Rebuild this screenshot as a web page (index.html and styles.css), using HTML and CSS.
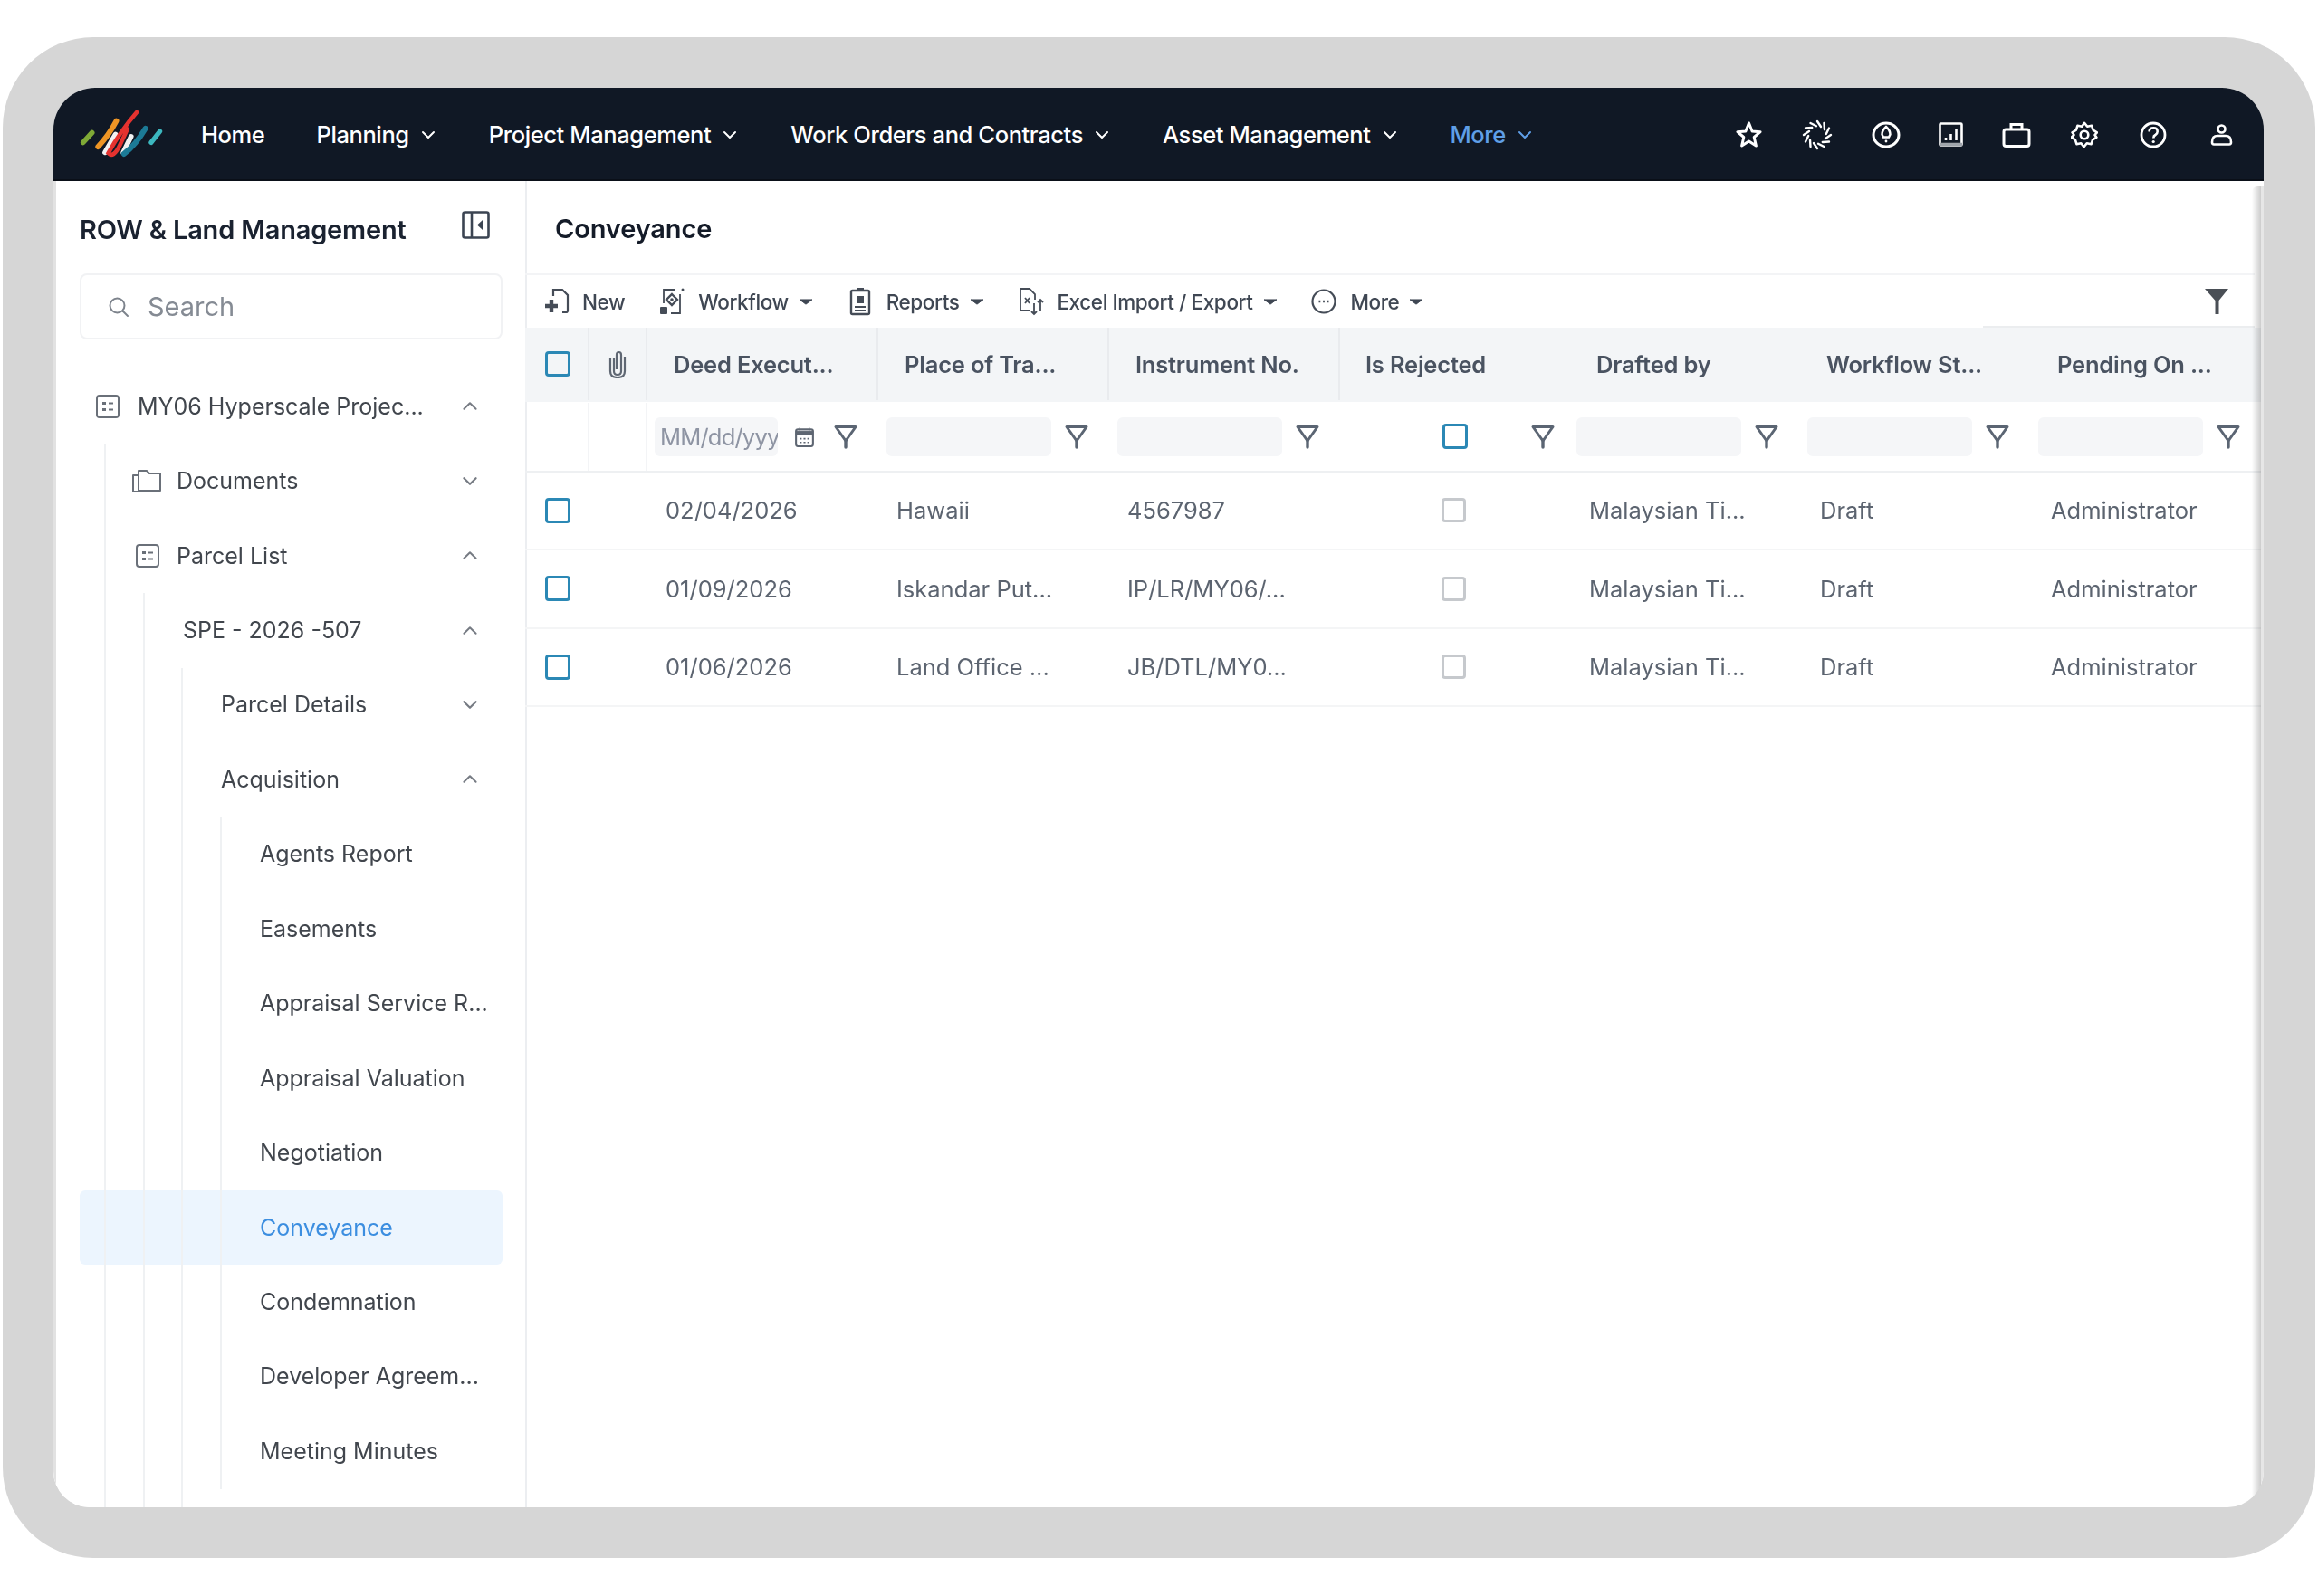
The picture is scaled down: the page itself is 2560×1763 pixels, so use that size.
FILE: index.html
```html
<!DOCTYPE html>
<html lang="en">
<head>
<meta charset="utf-8">
<title>Conveyance</title>
<link rel="stylesheet" href="styles.css">
</head>
<body>
<svg class="defs" aria-hidden="true">
  <symbol id="chev" viewBox="0 0 16 10"><path d="M2 2l6 6 6-6" fill="none" stroke="currentColor" stroke-width="2" stroke-linecap="round" stroke-linejoin="round"/></symbol>
  <symbol id="chev-up" viewBox="0 0 16 10"><path d="M2 8l6-6 6 6" fill="none" stroke="currentColor" stroke-width="1.800" stroke-linecap="round" stroke-linejoin="round"/></symbol>
  <symbol id="caret" viewBox="0 0 18 8"><path d="M1 1h16L9 7z" fill="currentColor" stroke="currentColor" stroke-linejoin="round"/></symbol>
  <symbol id="funnel" viewBox="0 0 28 28"><path d="M3 3.500h22L14 19z" fill="none" stroke="currentColor" stroke-width="3" stroke-linejoin="round"/><path d="M14 18v8" stroke="currentColor" stroke-width="3.400" stroke-linecap="round"/></symbol>
  <symbol id="grid-doc" viewBox="0 0 28 28"><rect x="2" y="2" width="24" height="24" rx="3" fill="none" stroke="currentColor" stroke-width="2"/><rect x="8" y="9" width="4" height="3" fill="currentColor"/><rect x="15" y="9.500" width="5" height="2" fill="currentColor"/><rect x="8" y="16" width="4" height="3" fill="currentColor"/><rect x="15" y="16.500" width="5" height="2" fill="currentColor"/></symbol>
</svg>

<div class="frame">
  <div class="app">
    <header class="nav">
      <svg class="logo" viewBox="50 95 280 160" aria-label="Logo">
        <g fill="none" stroke-linecap="round">
          <path d="M64 205L94 172" stroke="#7fa936" stroke-width="17"/>
          <path d="M114 219Q150 180 175 133" stroke="#ee9525" stroke-width="18"/>
          <path d="M137 238L172 178M198 238L224 185" stroke="#f2f2f2" stroke-width="17"/>
          <path d="M243 104Q190 165 148 240Q165 258 186 215L212 160" stroke="#e5322f" stroke-width="14"/>
          <path d="M200 243Q238 215 272 158" stroke="#1c7a96" stroke-width="18"/>
          <path d="M291 205L320 168" stroke="#3cb7bf" stroke-width="16"/>
        </g>
      </svg>
      <nav class="nav-menu">
        <a class="nav-link nav-home">Home</a>
        <a class="nav-link">Planning<svg class="nav-chev"><use href="#chev"/></svg></a>
        <a class="nav-link">Project Management<svg class="nav-chev"><use href="#chev"/></svg></a>
        <a class="nav-link">Work Orders and Contracts<svg class="nav-chev"><use href="#chev"/></svg></a>
        <a class="nav-link">Asset Management<svg class="nav-chev"><use href="#chev"/></svg></a>
        <a class="nav-link is-more">More<svg class="nav-chev"><use href="#chev"/></svg></a>
      </nav>
      <div class="nav-icons">
        <span class="slot"><svg class="ic-star" viewBox="0 0 31 32"><path d="M15.500 3l3.600 9 9 .7-6.900 5.800 2.200 9.500-7.900-5.100L7.600 28l2.200-9.500L2.900 12.700l9-.7z" fill="none" stroke="currentColor" stroke-width="3" stroke-linejoin="round"/></svg></span>
        <span class="slot"><svg class="ic-spin" viewBox="0 0 34 34"><g fill="none" stroke="currentColor" stroke-width="2.400" stroke-linecap="round"><path d="M17 2l4 6"/><path d="M17 2l4 6" transform="rotate(30 17 17)"/><path d="M17 2l4 6" transform="rotate(60 17 17)"/><path d="M17 2l4 6" transform="rotate(90 17 17)"/><path d="M17 2l4 6" transform="rotate(120 17 17)"/><path d="M17 2l4 6" transform="rotate(150 17 17)"/><path d="M17 2l4 6" transform="rotate(180 17 17)"/><path d="M17 2l4 6" transform="rotate(210 17 17)"/><path d="M17 2l4 6" transform="rotate(240 17 17)"/><path d="M17 2l4 6" transform="rotate(270 17 17)"/><path d="M17 2l4 6" transform="rotate(300 17 17)"/><path d="M17 2l4 6" transform="rotate(330 17 17)"/></g></svg></span>
        <span class="slot"><svg class="ic-rocket" viewBox="0 0 32 30"><ellipse cx="16" cy="15" rx="14" ry="13" fill="none" stroke="currentColor" stroke-width="3"/><path d="M16 6q4.500 4 4.500 8.500l-1.500 3h-6l-1.500-3Q11.500 10 16 6z" fill="none" stroke="currentColor" stroke-width="2.400"/><circle cx="16" cy="22" r="1.400" fill="currentColor"/></svg></span>
        <span class="slot slot-tight"><svg class="ic-chart" viewBox="0 0 27 27"><rect x="1.500" y="1.500" width="24" height="24" rx="1" fill="none" stroke="currentColor" stroke-width="2.600"/><path d="M1 24.500h25" stroke="#a0a5ac" stroke-width="3.500"/><path d="M8 20v-3M13.500 20v-7M19.500 20V8" stroke="currentColor" stroke-width="2.600"/></svg></span>
        <span class="slot"><svg class="ic-bag" viewBox="0 0 32 28"><rect x="2" y="8" width="28" height="18.500" rx="2.500" fill="none" stroke="currentColor" stroke-width="3"/><path d="M10 8V2.500h12V8" fill="none" stroke="currentColor" stroke-width="3"/></svg></span>
        <span class="slot"><svg class="ic-gear" viewBox="0 0 30 30"><path d="M15 1.800l3.200 4 4.900-1 1.500 4.900 4.300 2.600L26.500 15l1.900 2.700-4.300 2.600-1.500 4.900-4.900-1-3.200 4-3.200-4-4.900 1-1.500-4.900-4.300-2.600L3.500 15l-1.900-2.700 4.300-2.600 1.500-4.900 4.900 1z" fill="none" stroke="currentColor" stroke-width="2.600" stroke-linejoin="round"/><circle cx="15" cy="15" r="4.300" fill="none" stroke="currentColor" stroke-width="2.600"/></svg></span>
        <span class="slot"><svg class="ic-help" viewBox="0 0 30 30"><circle cx="15" cy="15" r="13" fill="none" stroke="currentColor" stroke-width="2.800"/><path d="M10.500 11.500q.5-4.200 4.700-4.200 4.500 0 4.500 4 0 2.400-2.300 3.700-2.100 1.100-2.100 3.400" fill="none" stroke="currentColor" stroke-width="2.600"/><circle cx="15.200" cy="22.500" r="1.600" fill="currentColor"/></svg></span>
        <span class="slot"><svg class="ic-user" viewBox="0 0 25 24"><circle cx="12.500" cy="5.500" r="4" fill="none" stroke="currentColor" stroke-width="2.600"/><path d="M2 20q0-7 6-7h9q6 0 6 7 0 2.500-2 2.500H4q-2 0-2-2.500z" fill="none" stroke="currentColor" stroke-width="2.600"/></svg></span>
      </div>
    </header>

    <div class="workspace">
      <aside class="sidebar">
        <div class="side-head">
          <h2 class="side-title">ROW &amp; Land Management</h2>
          <svg class="collapse" viewBox="0 0 31 31"><rect x="1.500" y="1.500" width="28" height="28" rx="2" fill="none" stroke="currentColor" stroke-width="2.600"/><path d="M11 2v27" stroke="currentColor" stroke-width="2.600"/><path d="M23 10v11l-6-5.500z" fill="currentColor"/></svg>
        </div>
        <div class="search">
          <svg class="search-icon" viewBox="0 0 24 24"><circle cx="10.500" cy="10.500" r="8" fill="none" stroke="currentColor" stroke-width="2"/><path d="M16.500 16.500L22 22" stroke="currentColor" stroke-width="2" stroke-linecap="round"/></svg>
          <span>Search</span>
        </div>
        <ul class="tree">
          <li>
            <div class="row row-root">
              <svg class="row-icon icon-root"><use href="#grid-doc"/></svg>
              <span class="label">MY06 Hyperscale Projec...</span>
              <svg class="tree-chev"><use href="#chev-up"/></svg>
            </div>
            <ul class="level level-2">
              <li>
                <div class="row row-icon-row">
                  <svg class="row-icon" viewBox="0 0 34 28"><path d="M8 5V3h9l3 3h12v19H8zM8 8H2v18h26" fill="none" stroke="currentColor" stroke-width="2" stroke-linejoin="round"/></svg>
                  <span class="label">Documents</span>
                  <svg class="tree-chev"><use href="#chev"/></svg>
                </div>
              </li>
              <li>
                <div class="row row-icon-row">
                  <svg class="row-icon icon-parcel"><use href="#grid-doc"/></svg>
                  <span class="label">Parcel List</span>
                  <svg class="tree-chev"><use href="#chev-up"/></svg>
                </div>
                <ul class="level level-3">
                  <li>
                    <div class="row row-text"><span class="label">SPE - 2026 -507</span><svg class="tree-chev"><use href="#chev-up"/></svg></div>
                    <ul class="level level-4">
                      <li><div class="row row-text"><span class="label">Parcel Details</span><svg class="tree-chev"><use href="#chev"/></svg></div></li>
                      <li>
                        <div class="row row-text"><span class="label">Acquisition</span><svg class="tree-chev"><use href="#chev-up"/></svg></div>
                        <ul class="level level-5">
                          <li><div class="row row-text"><span class="label">Agents Report</span></div></li>
                          <li><div class="row row-text"><span class="label">Easements</span></div></li>
                          <li><div class="row row-text"><span class="label">Appraisal Service R...</span></div></li>
                          <li><div class="row row-text"><span class="label">Appraisal Valuation</span></div></li>
                          <li><div class="row row-text"><span class="label">Negotiation</span></div></li>
                          <li class="active"><div class="row row-text"><span class="label">Conveyance</span></div></li>
                          <li><div class="row row-text"><span class="label">Condemnation</span></div></li>
                          <li><div class="row row-text"><span class="label">Developer Agreem...</span></div></li>
                          <li><div class="row row-text"><span class="label">Meeting Minutes</span></div></li>
                        </ul>
                      </li>
                    </ul>
                  </li>
                </ul>
              </li>
            </ul>
          </li>
        </ul>
      </aside>

      <main class="content">
        <h1 class="page-title">Conveyance</h1>
        <div class="toolbar">
          <a class="tool tool-new">
            <svg class="tool-icon" viewBox="0 0 30 32"><path d="M9 10V3h10l6 6v17q0 2-2 2h-4" fill="none" stroke="currentColor" stroke-width="2.200"/><path d="M7 14v14M0 21h14" stroke="currentColor" stroke-width="4.400"/></svg>
            <span>New</span>
          </a>
          <a class="tool">
            <svg class="tool-icon" viewBox="0 0 30 32"><path d="M6 18V3h13M24 8v21H14" fill="none" stroke="currentColor" stroke-width="1.800"/><path d="M15 8l6 6-6 6-6-6z" fill="none" stroke="currentColor" stroke-width="2.400"/><circle cx="15" cy="14" r="1.800" fill="currentColor"/><rect x="2" y="22" width="8" height="8" rx="1" fill="currentColor"/><circle cx="27" cy="3" r="1.500" fill="currentColor"/></svg>
            <span>Workflow</span><svg class="tool-caret"><use href="#caret"/></svg>
          </a>
          <a class="tool">
            <svg class="tool-icon" viewBox="0 0 30 32"><rect x="5" y="4" width="20" height="26" rx="1.500" fill="none" stroke="currentColor" stroke-width="2.400"/><rect x="11" y="1" width="8" height="4" fill="currentColor"/><rect x="11" y="10" width="8" height="8" fill="currentColor"/><path d="M9 22h12M9 26h12" stroke="currentColor" stroke-width="1.800"/></svg>
            <span>Reports</span><svg class="tool-caret"><use href="#caret"/></svg>
          </a>
          <a class="tool">
            <svg class="tool-icon" viewBox="0 0 30 32"><path d="M14 26H4V2h10l6 6v6" fill="none" stroke="currentColor" stroke-width="1.800"/><path d="M9 12l5 6M14 12l-5 6" stroke="currentColor" stroke-width="1.800"/><path d="M19 18v12M26 14v12M16 27l3 3 3-3M23 17l3-3 3 3" fill="none" stroke="currentColor" stroke-width="1.800"/></svg>
            <span>Excel Import / Export</span><svg class="tool-caret"><use href="#caret"/></svg>
          </a>
          <a class="tool">
            <svg class="tool-icon" viewBox="0 0 30 32"><circle cx="15" cy="16" r="12.500" fill="none" stroke="currentColor" stroke-width="2.200"/><path d="M9.500 16h1.800M14.100 16h1.800M18.700 16h1.800" stroke="currentColor" stroke-width="2.400"/></svg>
            <span>More</span><svg class="tool-caret"><use href="#caret"/></svg>
          </a>
          <svg class="tool-filter" viewBox="0 0 28 32"><path d="M1 2h26L16.500 15v15h-4V15z" fill="currentColor"/></svg>
        </div>

        <div class="table">
          <div class="tr thead">
            <div class="th sep check-cell"><span class="box box-blue"></span></div>
            <div class="th sep clip-cell"><svg class="clip" viewBox="0 0 24 32"><path d="M8 9v15q0 4 4 4t4-4V6q0-3-2.500-3T11 6v16" fill="none" stroke="currentColor" stroke-width="2.200"/><path d="M4 9v15q0 7 8 7t8-7V8" fill="none" stroke="currentColor" stroke-width="2.200"/></svg></div>
            <div class="th sep">Deed Execut...</div>
            <div class="th sep">Place of Tra...</div>
            <div class="th sep">Instrument No.</div>
            <div class="th th-tight">Is Rejected</div>
            <div class="th th-tight">Drafted by</div>
            <div class="th th-end">Workflow St...</div>
            <div class="th th-end">Pending On ...</div>
          </div>
          <div class="tr tfilter">
            <div class="fc sep"></div>
            <div class="fc sep"></div>
            <div class="fc fc-date">
              <div class="input date-input">MM/dd/yyyy</div>
              <svg class="cal" viewBox="0 0 22 24"><rect x="2" y="4" width="18" height="18" rx="2" fill="none" stroke="currentColor" stroke-width="2"/><path d="M2 6h18v4H2zM6 2v4M16 2v4" fill="currentColor" stroke="currentColor"/><path d="M6 14h2M10 14h2M14 14h2M6 18h2M10 18h2M14 18h2" stroke="currentColor" stroke-width="1.600"/></svg>
              <svg class="funnel"><use href="#funnel"/></svg>
            </div>
            <div class="fc fc-left"><div class="input"></div><svg class="funnel"><use href="#funnel"/></svg></div>
            <div class="fc fc-left"><div class="input"></div><svg class="funnel"><use href="#funnel"/></svg></div>
            <div class="fc fc-check"><span class="box box-blue"></span><svg class="funnel"><use href="#funnel"/></svg></div>
            <div class="fc fc-right"><div class="input"></div><svg class="funnel"><use href="#funnel"/></svg></div>
            <div class="fc fc-right"><div class="input"></div><svg class="funnel"><use href="#funnel"/></svg></div>
            <div class="fc fc-right"><div class="input"></div><svg class="funnel"><use href="#funnel"/></svg></div>
          </div>
          <div class="tr tbody">
            <div class="td check-cell"><span class="box box-blue"></span></div><div class="td"></div>
            <div class="td">02/04/2026</div><div class="td">Hawaii</div><div class="td">4567987</div>
            <div class="td td-check"><span class="box box-grey"></span></div>
            <div class="td">Malaysian Ti...</div><div class="td">Draft</div><div class="td">Administrator</div>
          </div>
          <div class="tr tbody">
            <div class="td check-cell"><span class="box box-blue"></span></div><div class="td"></div>
            <div class="td">01/09/2026</div><div class="td">Iskandar Put...</div><div class="td">IP/LR/MY06/...</div>
            <div class="td td-check"><span class="box box-grey"></span></div>
            <div class="td">Malaysian Ti...</div><div class="td">Draft</div><div class="td">Administrator</div>
          </div>
          <div class="tr tbody">
            <div class="td check-cell"><span class="box box-blue"></span></div><div class="td"></div>
            <div class="td">01/06/2026</div><div class="td">Land Office ...</div><div class="td">JB/DTL/MY0...</div>
            <div class="td td-check"><span class="box box-grey"></span></div>
            <div class="td">Malaysian Ti...</div><div class="td">Draft</div><div class="td">Administrator</div>
          </div>
        </div>
      </main>
    </div>
  </div>
</div>
</body>
</html>
```

FILE: styles.css
```css
* { box-sizing: border-box; }
html, body { margin: 0; height: 100%; background: #fff; }
body { font-family: Inter, "Noto Sans", sans-serif; overflow: hidden; }
.defs { position: absolute; width: 0; height: 0; }
h1, h2 { margin: 0; }
ul { list-style: none; margin: 0; padding: 0; }

.frame {
  margin: 41px 3px 0;
  width: 2554px;
  height: 1680px;
  padding: 56px 57px 56px 56px;
  background: #d6d6d6;
  border-radius: 100px;
}
.app {
  height: 1568px;
  display: flex;
  flex-direction: column;
  background: #fff;
  border-radius: 46px 46px 40px 40px;
  overflow: hidden;
  filter: blur(.7px);
}

/* Top navigation */
.nav {
  flex: 0 0 103px;
  display: flex;
  align-items: center;
  padding: 2px 9px 0 28px;
  background: #101825;
  border-bottom: 2px solid #0a0f18;
  color: #fff;
}
.logo { width: 93px; height: 53px; flex: none; margin-top: -2px; }
.nav-menu { display: flex; align-items: center; gap: 59px; margin-left: 42px; }
.nav-link { display: flex; align-items: center; gap: 13px; font-size: 25.500px; font-weight: 500; letter-spacing: -.4px; white-space: nowrap; }
.nav-home { margin-right: -2px; }
.is-more { color: #5f9fe8; }
.nav-chev { width: 16px; height: 10px; }
.nav-icons { margin-left: auto; display: flex; align-items: center; }
.slot { width: 75.500px; display: flex; justify-content: center; align-items: center; }
.slot-tight { margin: 0 -3.500px; }
.ic-star { width: 31px; height: 32px; }
.ic-spin { width: 34px; height: 34px; }
.ic-rocket { width: 32px; height: 30px; }
.ic-chart { width: 27px; height: 27px; }
.ic-bag { width: 32px; height: 28px; }
.ic-gear { width: 30px; height: 30px; }
.ic-help { width: 30px; height: 30px; }
.ic-user { width: 25px; height: 24px; }

/* Workspace */
.workspace { flex: 1; min-height: 0; display: flex; }
.sidebar {
  flex: 0 0 523px;
  margin-right: -2px;
  padding: 0 25px 0 26px;
  border-left: 3px solid #e2e2e2;
  border-right: 2px solid #eceef1;
  overflow: hidden;
  isolation: isolate;
  background: #fff;
}
.side-head { height: 52px; margin-top: 27px; display: flex; align-items: center; justify-content: space-between; padding-right: 14px; }
.side-title { font-size: 29px; font-weight: 600; color: #1a2230; letter-spacing: -.2px; white-space: nowrap; }
.collapse { width: 31px; height: 31px; color: #3b4452; margin-top: -10px; }
.search {
  margin-top: 23px;
  height: 73px;
  display: flex;
  align-items: center;
  gap: 20px;
  padding-left: 29px;
  border: 2px solid #f1f2f4;
  border-radius: 8px;
  color: #858b94;
  font-size: 29px;
}
.search-icon { width: 24px; height: 24px; color: #7d838c; }

.tree { margin-top: 33px; }
.row { height: 82.450px; display: flex; align-items: center; padding: 0 27px 1px 0; color: #41464d; font-size: 25px; white-space: nowrap; }
.tree-chev { width: 18px; height: 11px; margin-left: auto; color: #767b83; flex: none; }
.row-root { padding-left: 14px; }
.row-root .row-icon { margin-right: 16px; }
.icon-root, .icon-parcel { width: 28px; height: 28px; flex: none; color: #6a7079; }
.row-icon { width: 34px; height: 28px; flex: none; color: #6a7079; }
.row-icon-row { padding-left: 28px; }
.row-icon-row .row-icon { margin-right: 16px; }
.row-icon-row .icon-parcel { margin: 0 15px 0 1px; }
.row-text { padding-left: 42px; }
.level { border-left: 2px solid #eff1f3; }
.level-2 { margin-left: 27px; padding-bottom: 120px; }
.level-3 { margin-left: 41px; padding-bottom: 120px; }
.level-4 { margin-left: 40px; padding-bottom: 120px; }
.level-5 { margin-left: 41px; }
.active { position: relative; }
.active::before {
  content: "";
  position: absolute;
  z-index: -1;
  top: 0;
  bottom: 0;
  left: -157px;
  right: 0;
  background: #ecf5fe;
  border-radius: 6px;
}
.active .row { color: #3c8ee0; }

/* Content */
.content { flex: 1; min-width: 0; position: relative; }
.content::after {
  content: "";
  position: absolute;
  top: 6px;
  bottom: 0;
  right: 0;
  width: 13px;
  border-radius: 6px 0 0 0;
  background: linear-gradient(90deg, rgba(0, 0, 0, 0), rgba(0, 0, 0, .2) 77%, #e6e6e6 77%);
}
.page-title { height: 102px; padding: 27px 0 0 33px; line-height: 52px; font-size: 29px; font-weight: 600; color: #141b28; letter-spacing: -.15px; }
.toolbar {
  position: relative;
  height: 60px;
  display: flex;
  align-items: center;
  padding: 0 28px 0 22px;
  gap: 36.900px;
  margin-right: 10px;
  border-top: 2px solid #f3f4f6;
  color: #3f4753;
}
.toolbar::after {
  content: "";
  position: absolute;
  right: 0;
  bottom: 0;
  width: 300px;
  height: 2px;
  background: #ebedef;
}
.tool { display: flex; align-items: center; font-size: 22.500px; font-weight: 500; letter-spacing: -.4px; white-space: nowrap; }
.tool-icon { width: 30px; height: 32px; margin-right: 14px; color: #454c57; flex: none; }
.tool-new .tool-icon { margin-right: 11px; }
.tool-caret { width: 16px; height: 7px; margin-left: 11px; }
.tool-filter { width: 28px; height: 32px; margin-left: auto; color: #4a4f56; }

.table { display: flex; flex-direction: column; }
.tr { display: grid; grid-template-columns: 71px 64px repeat(7, 255px); }
.thead { height: 82px; padding-bottom: 2px; background: #f3f5f7; }
.th { display: flex; align-items: center; padding-left: 29px; font-size: 25.500px; font-weight: 600; color: #4a5361; letter-spacing: -.2px; white-space: nowrap; }
.sep { border-right: 2px solid #e9ebee; }
.thead .check-cell { padding: 0 0 0 22px; }
.thead .clip-cell { padding: 0 0 0 19px; }
.thead .th-tight { padding-left: 28px; }
.thead .th-end { padding-left: 27px; }
.clip { width: 24px; height: 32px; color: #5f6773; }

.tfilter { height: 77.500px; padding-top: 1px; border-bottom: 2px solid #eef0f2; }
.fc { display: flex; align-items: center; }
.fc.sep { border-right-color: #f3f4f6; }
.input { height: 43px; width: 182px; background: #f5f6f8; border-radius: 6px; flex: none; }
.funnel { width: 28px; height: 28px; color: #5b6573; flex: none; }
.fc-left { padding-left: 9px; gap: 14px; }
.fc-right { padding-left: 6px; gap: 14px; }
.fc-date { padding-left: 8px; }
.date-input { width: 136px; padding-left: 6px; line-height: 43px; overflow: hidden; white-space: nowrap; color: #8e94a3; font-size: 25.500px; letter-spacing: -.8px; }
.cal { width: 23px; height: 25px; color: #5e6672; margin-left: 18px; flex: none; }
.fc-date .funnel { margin-left: 20px; }
.fc-check { padding-left: 113px; }
.fc-check .funnel { margin-left: 69px; }

.tbody { height: 86.500px; border-bottom: 2px solid #f4f5f6; }
.td { display: flex; align-items: center; padding-left: 20px; font-size: 25.500px; color: #5c6470; white-space: nowrap; }
.tbody .check-cell { padding-left: 22px; }
.tbody .td-check { padding-left: 112px; }
.box { display: block; width: 28px; height: 28px; border-radius: 4px; background: transparent; }
.box-blue { border: 3px solid #2b88b5; }
.box-grey { border: 3px solid #c6c9cd; width: 27px; height: 27px; }
```
